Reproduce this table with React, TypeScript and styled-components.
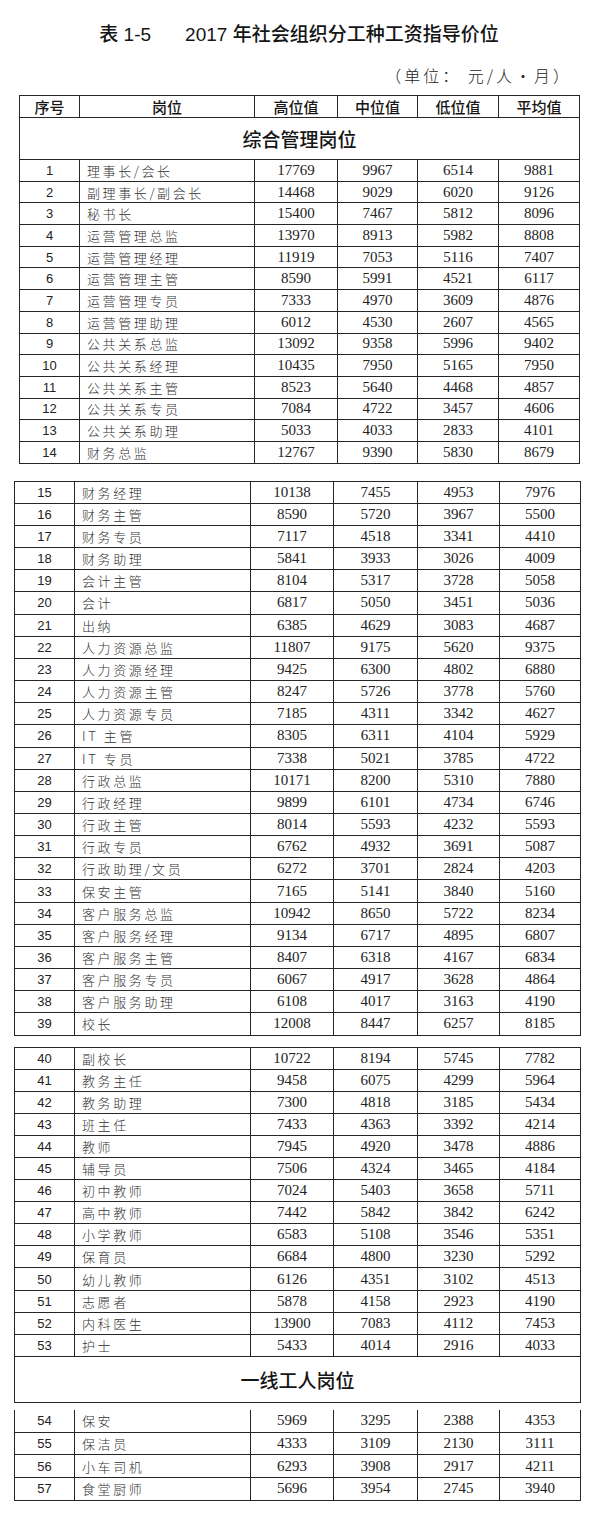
import styled, { createGlobalStyle } from "styled-components";

const GlobalStyle = createGlobalStyle`
  html, body {
    margin: 0;
    padding: 0;
    background: #ffffff;
  }
  body {
    font-family: "Liberation Sans", "Noto Sans CJK SC", sans-serif;
    color: #1a1a1a;
  }
`;

type RowData = [number, string, number, number, number, number];

const blockA: RowData[] = [
  [1, "理事长/会长", 17769, 9967, 6514, 9881],
  [2, "副理事长/副会长", 14468, 9029, 6020, 9126],
  [3, "秘书长", 15400, 7467, 5812, 8096],
  [4, "运营管理总监", 13970, 8913, 5982, 8808],
  [5, "运营管理经理", 11919, 7053, 5116, 7407],
  [6, "运营管理主管", 8590, 5991, 4521, 6117],
  [7, "运营管理专员", 7333, 4970, 3609, 4876],
  [8, "运营管理助理", 6012, 4530, 2607, 4565],
  [9, "公共关系总监", 13092, 9358, 5996, 9402],
  [10, "公共关系经理", 10435, 7950, 5165, 7950],
  [11, "公共关系主管", 8523, 5640, 4468, 4857],
  [12, "公共关系专员", 7084, 4722, 3457, 4606],
  [13, "公共关系助理", 5033, 4033, 2833, 4101],
  [14, "财务总监", 12767, 9390, 5830, 8679],
];

const blockB: RowData[] = [
  [15, "财务经理", 10138, 7455, 4953, 7976],
  [16, "财务主管", 8590, 5720, 3967, 5500],
  [17, "财务专员", 7117, 4518, 3341, 4410],
  [18, "财务助理", 5841, 3933, 3026, 4009],
  [19, "会计主管", 8104, 5317, 3728, 5058],
  [20, "会计", 6817, 5050, 3451, 5036],
  [21, "出纳", 6385, 4629, 3083, 4687],
  [22, "人力资源总监", 11807, 9175, 5620, 9375],
  [23, "人力资源经理", 9425, 6300, 4802, 6880],
  [24, "人力资源主管", 8247, 5726, 3778, 5760],
  [25, "人力资源专员", 7185, 4311, 3342, 4627],
  [26, "IT 主管", 8305, 6311, 4104, 5929],
  [27, "IT 专员", 7338, 5021, 3785, 4722],
  [28, "行政总监", 10171, 8200, 5310, 7880],
  [29, "行政经理", 9899, 6101, 4734, 6746],
  [30, "行政主管", 8014, 5593, 4232, 5593],
  [31, "行政专员", 6762, 4932, 3691, 5087],
  [32, "行政助理/文员", 6272, 3701, 2824, 4203],
  [33, "保安主管", 7165, 5141, 3840, 5160],
  [34, "客户服务总监", 10942, 8650, 5722, 8234],
  [35, "客户服务经理", 9134, 6717, 4895, 6807],
  [36, "客户服务主管", 8407, 6318, 4167, 6834],
  [37, "客户服务专员", 6067, 4917, 3628, 4864],
  [38, "客户服务助理", 6108, 4017, 3163, 4190],
  [39, "校长", 12008, 8447, 6257, 8185],
];

const blockC: RowData[] = [
  [40, "副校长", 10722, 8194, 5745, 7782],
  [41, "教务主任", 9458, 6075, 4299, 5964],
  [42, "教务助理", 7300, 4818, 3185, 5434],
  [43, "班主任", 7433, 4363, 3392, 4214],
  [44, "教师", 7945, 4920, 3478, 4886],
  [45, "辅导员", 7506, 4324, 3465, 4184],
  [46, "初中教师", 7024, 5403, 3658, 5711],
  [47, "高中教师", 7442, 5842, 3842, 6242],
  [48, "小学教师", 6583, 5108, 3546, 5351],
  [49, "保育员", 6684, 4800, 3230, 5292],
  [50, "幼儿教师", 6126, 4351, 3102, 4513],
  [51, "志愿者", 5878, 4158, 2923, 4190],
  [52, "内科医生", 13900, 7083, 4112, 7453],
  [53, "护士", 5433, 4014, 2916, 4033],
];

const blockD: RowData[] = [
  [54, "保安", 5969, 3295, 2388, 4353],
  [55, "保洁员", 4333, 3109, 2130, 3111],
  [56, "小车司机", 6293, 3908, 2917, 4211],
  [57, "食堂厨师", 5696, 3954, 2745, 3940],
];

const headers = ["序号", "岗位", "高位值", "中位值", "低位值", "平均值"];

// column widths of each printed page of the table
const colsA = "60px 175px 83px 80px 81px 81px";
const colsB = "60px 176px 83px 84px 82px 81px";

const Page = styled.div`
  width: 594px;
  padding-top: 25px;
`;

const Title = styled.h1`
  margin: 0;
  padding-left: 4px;
  text-align: center;
  font-family: "Liberation Sans", "Noto Sans CJK SC", sans-serif;
  font-size: 19px;
  font-weight: 500;
  line-height: 20px;
  color: #151515;

  span {
    margin-right: 34px;
  }
`;

const Unit = styled.div`
  margin-top: 20px;
  padding-right: 22px;
  text-align: right;
  font-family: "Noto Sans CJK SC", sans-serif;
  font-size: 16px;
  font-weight: 300;
  line-height: 20px;
  letter-spacing: 3px;
  color: #222;
`;

const Block = styled.div<{ $left: number; $gap: number; $open?: boolean }>`
  display: flex;
  flex-direction: column;
  width: max-content;
  margin-left: ${(p) => p.$left}px;
  margin-top: ${(p) => p.$gap}px;
  border-left: 1px solid #262626;
  border-top: ${(p) => (p.$open ? "none" : "1px solid #262626")};
`;

const TableRow = styled.div<{ $cols: string; $h: number }>`
  display: grid;
  grid-template-columns: ${(p) => p.$cols};
  height: ${(p) => p.$h}px;
`;

const Cell = styled.div`
  display: flex;
  align-items: center;
  justify-content: center;
  border-right: 1px solid #262626;
  border-bottom: 1px solid #262626;
  box-sizing: border-box;
  white-space: nowrap;
  overflow: hidden;
`;

const HeadCell = styled(Cell)`
  font-family: "Noto Sans CJK SC", sans-serif;
  font-size: 15px;
  font-weight: 500;
  color: #151515;
`;

const SectionRow = styled(Cell)<{ $h: number }>`
  height: ${(p) => p.$h}px;
  font-family: "Noto Sans CJK SC", sans-serif;
  font-size: 19px;
  font-weight: 500;
  color: #151515;
`;

const NumCell = styled(Cell)`
  font-family: "Liberation Sans", sans-serif;
  font-size: 13px;
  color: #222;
`;

const NameCell = styled(Cell)`
  justify-content: flex-start;
  padding-left: 7px;
  font-family: "Noto Sans CJK SC", sans-serif;
  font-size: 13px;
  font-weight: 300;
  letter-spacing: 2.6px;
  color: #333;
`;

const ValCell = styled(Cell)`
  font-family: "Liberation Serif", serif;
  font-size: 15px;
  color: #222;
`;

function Rows({ data, cols, h }: { data: RowData[]; cols: string; h: number }) {
  return (
    <>
      {data.map(([no, name, ...vals]) => (
        <TableRow key={no} $cols={cols} $h={h}>
          <NumCell>{no}</NumCell>
          <NameCell>{name}</NameCell>
          {vals.map((v, i) => (
            <ValCell key={i}>{v}</ValCell>
          ))}
        </TableRow>
      ))}
    </>
  );
}

export default function App() {
  return (
    <Page>
      <GlobalStyle />
      <Title>
        <span>表 1-5</span>2017 年社会组织分工种工资指导价位
      </Title>
      <Unit>（单位： 元/人•月）</Unit>

      <Block $left={19} $gap={10}>
        <TableRow $cols={colsA} $h={22}>
          {headers.map((h) => (
            <HeadCell key={h}>{h}</HeadCell>
          ))}
        </TableRow>
        <SectionRow $h={42}>综合管理岗位</SectionRow>
        <Rows data={blockA} cols={colsA} h={21.7} />
      </Block>

      <Block $left={14} $gap={17}>
        <Rows data={blockB} cols={colsB} h={22.16} />
      </Block>

      <Block $left={14} $gap={11}>
        <Rows data={blockC} cols={colsB} h={22.1} />
        <SectionRow $h={46}>一线工人岗位</SectionRow>
      </Block>

      <Block $left={14} $gap={7} $open>
        <Rows data={blockD} cols={colsB} h={22.75} />
      </Block>
    </Page>
  );
}
